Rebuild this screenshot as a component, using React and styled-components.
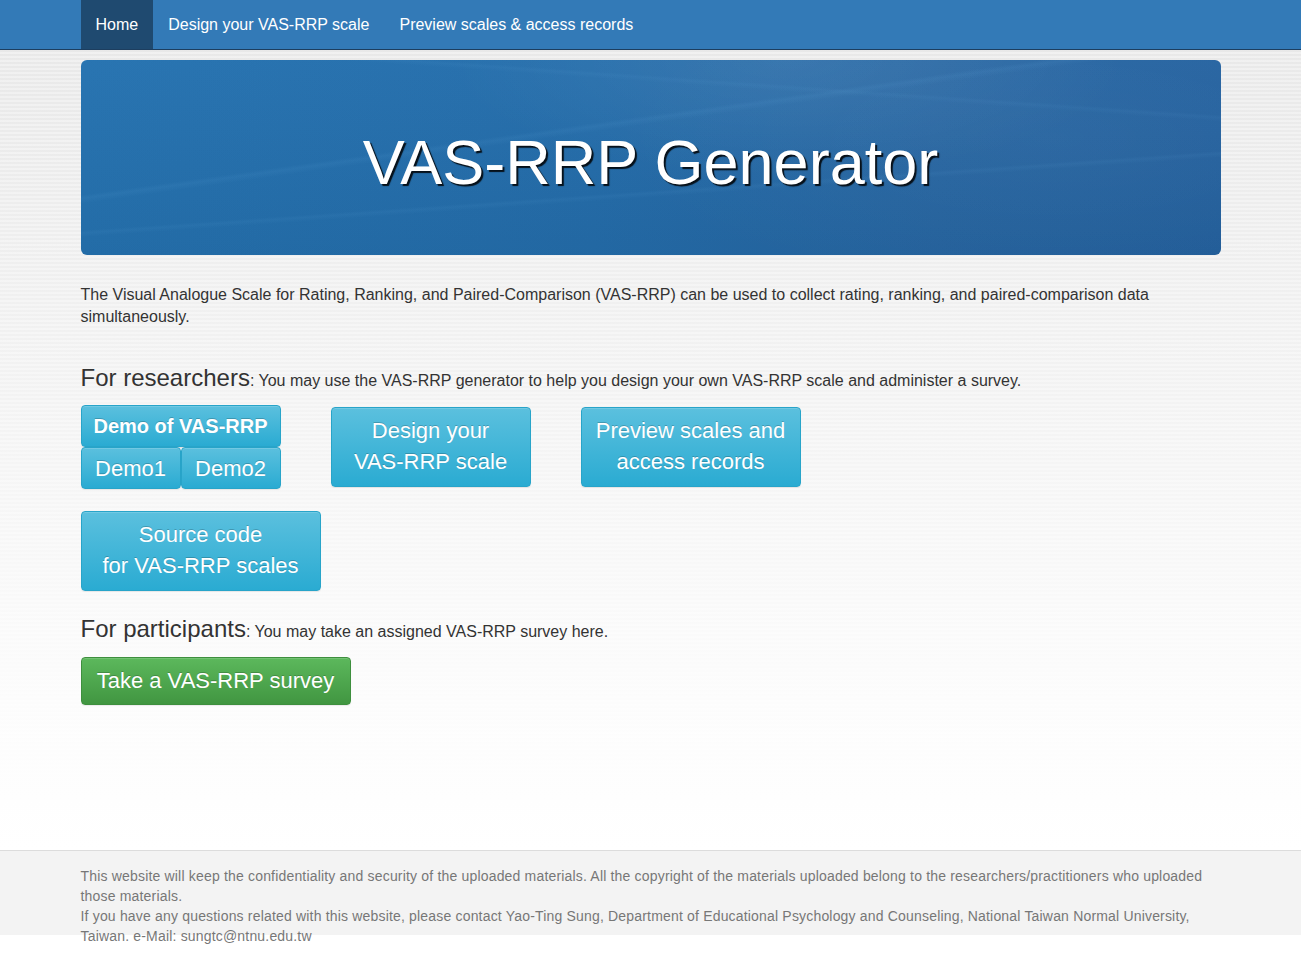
import React from "react";
import styled, { createGlobalStyle } from "styled-components";

const GlobalStyle = createGlobalStyle`
  html, body {
    margin: 0;
    padding: 0;
  }
  body {
    font-family: "Liberation Sans", Arial, Helvetica, sans-serif;
    color: #333;
    background-color: #fff;
    background-image:
      repeating-linear-gradient(to bottom, rgba(255,255,255,0.35) 0 2px, transparent 2px 4px),
      linear-gradient(to bottom, #e7e7e7 0, #f3f3f3 400px, #fcfcfc 700px, #fff 850px);
    background-repeat: no-repeat;
    background-size: 100% 850px;
  }
`;

// --- Navbar ---

const NavBar = styled.nav`
  height: 49px;
  background-color: #337ab7;
  border-bottom: 1px solid #1d3e5f;
`;

const Container = styled.div`
  width: 1170px;
  margin: 0 auto;
  padding: 0 15px;
  box-sizing: border-box;
`;

const NavList = styled.ul`
  display: flex;
  margin: 0;
  padding: 0;
  list-style: none;
  height: 49px;
`;

const NavLink = styled.a`
  display: block;
  padding: 0 15px;
  line-height: 49px;
  font-size: 16px;
  color: #fff;
  text-decoration: none;
  background-color: ${(p) => (p.$active ? "#1f4a70" : "transparent")};
`;

// --- Jumbotron ---

const Jumbotron = styled.div`
  height: 195px;
  border-radius: 6px;
  display: flex;
  align-items: center;
  justify-content: center;
  background-color: #2469a8;
  background-image:
    linear-gradient(172deg, transparent 38%, rgba(120,190,240,0.07) 39%, transparent 40.5%),
    linear-gradient(176deg, transparent 62%, rgba(120,190,240,0.06) 63%, transparent 64.5%),
    linear-gradient(184deg, transparent 20%, rgba(120,190,240,0.05) 21%, transparent 22.5%),
    radial-gradient(ellipse 30% 60% at 62% 0%, rgba(255,255,255,0.07), transparent 100%),
    radial-gradient(ellipse 40% 80% at 85% 40%, rgba(255,255,255,0.03), transparent 100%),
    linear-gradient(to bottom, rgba(255,255,255,0.02), rgba(0,0,0,0.05)),
    linear-gradient(to right, #2572b0 0%, #246dab 45%, #2666a3 75%, #2462a0 100%);
`;

const Title = styled.h1`
  margin: 8px 0 0;
  font-size: 63px;
  font-weight: 400;
  color: #fff;
  text-shadow: 2px 2px 1px rgba(0, 0, 0, 0.85);
`;

// --- Content ---

const Main = styled.main`
  padding-top: 10px;
  min-height: 790px;
`;

const Intro = styled.p`
  margin: 29px 0 0;
  font-size: 16px;
  line-height: 22px;
`;

const SectionTitle = styled.div`
  margin-top: ${(p) => p.$top}px;
  font-size: 16px;
  line-height: 28px;
`;

const BigLabel = styled.span`
  font-size: 24px;
  color: #333;
`;

const ButtonRow = styled.div`
  display: flex;
  align-items: flex-start;
  gap: 50px;
  margin-top: ${(p) => p.$top}px;
`;

const DemoGroup = styled.div`
  display: flex;
  flex-direction: column;
  width: 200px;
`;

const DemoPair = styled.div`
  display: flex;
`;

const Button = styled.a`
  display: flex;
  align-items: center;
  justify-content: center;
  box-sizing: border-box;
  width: ${(p) => p.$w}px;
  height: ${(p) => p.$h}px;
  margin-top: ${(p) => p.$mt || 0}px;
  padding: 0 8px ${(p) => p.$pb || 0}px;
  text-align: center;
  font-size: ${(p) => p.$size || 22}px;
  font-weight: ${(p) => (p.$bold ? 700 : 400)};
  line-height: 31px;
  color: #fff;
  text-decoration: none;
  text-shadow: 0 -1px 0 rgba(0, 0, 0, 0.2);
  border-radius: 4px;
  border: 1px solid ${(p) => (p.$green ? "#3e8f3e" : "#28a4c9")};
  background-image: ${(p) =>
    p.$green
      ? "linear-gradient(to bottom, #5cb85c 0, #419641 100%)"
      : "linear-gradient(to bottom, #5bc0de 0, #2aabd2 100%)"};
  box-shadow: inset 0 1px 0 rgba(255, 255, 255, 0.15), 0 1px 1px rgba(0, 0, 0, 0.075);
`;

// --- Footer ---

const Footer = styled.footer`
  height: 84px;
  margin-bottom: 26px;
  background-color: #f3f3f3;
  border-top: 1px solid #dcdcdc;
`;

const FooterText = styled.p`
  margin: 0;
  padding-top: 15px;
  font-size: 14px;
  line-height: 20px;
  letter-spacing: 0.18px;
  color: #777;
`;

export default function App() {
  return (
    <>
      <GlobalStyle />
      <NavBar>
        <Container>
          <NavList>
            <li><NavLink $active href="#">Home</NavLink></li>
            <li><NavLink href="#">Design your VAS-RRP scale</NavLink></li>
            <li><NavLink href="#">Preview scales &amp; access records</NavLink></li>
          </NavList>
        </Container>
      </NavBar>

      <Main>
        <Container>
          <Jumbotron>
            <Title>VAS-RRP Generator</Title>
          </Jumbotron>

          <Intro>
            The Visual Analogue Scale for Rating, Ranking, and Paired-Comparison (VAS-RRP) can be used to collect
            rating, ranking, and paired-comparison data simultaneously.
          </Intro>

          <SectionTitle $top={36}>
            <BigLabel>For researchers</BigLabel>: You may use the VAS-RRP generator to help you design your own
            VAS-RRP scale and administer a survey.
          </SectionTitle>

          <ButtonRow $top={10}>
            <DemoGroup>
              <Button $w={200} $h={42} $size={20} $bold href="#">Demo of VAS-RRP</Button>
              <DemoPair>
                <Button $w={100} $h={42} href="#">Demo1</Button>
                <Button $w={100} $h={42} href="#">Demo2</Button>
              </DemoPair>
            </DemoGroup>
            <Button $w={200} $h={80} $mt={2} $pb={3} href="#">Design your<br />VAS-RRP scale</Button>
            <Button $w={220} $h={80} $mt={2} $pb={3} href="#">Preview scales and<br />access records</Button>
          </ButtonRow>

          <ButtonRow $top={22}>
            <Button $w={240} $h={80} $pb={3} href="#">Source code<br />for VAS-RRP scales</Button>
          </ButtonRow>

          <SectionTitle $top={24}>
            <BigLabel>For participants</BigLabel>: You may take an assigned VAS-RRP survey here.
          </SectionTitle>

          <ButtonRow $top={11}>
            <Button $w={270} $h={48} $size={22} $pb={2} $green href="#">Take a VAS-RRP survey</Button>
          </ButtonRow>
        </Container>
      </Main>

      <Footer>
        <Container>
          <FooterText>
            This website will keep the confidentiality and security of the uploaded materials. All the copyright of
            the materials uploaded belong to the researchers/practitioners who uploaded those materials.
            <br />
            If you have any questions related with this website, please contact Yao-Ting Sung, Department of
            Educational Psychology and Counseling, National Taiwan Normal University, Taiwan. e-Mail:
            sungtc@ntnu.edu.tw
          </FooterText>
        </Container>
      </Footer>
    </>
  );
}
